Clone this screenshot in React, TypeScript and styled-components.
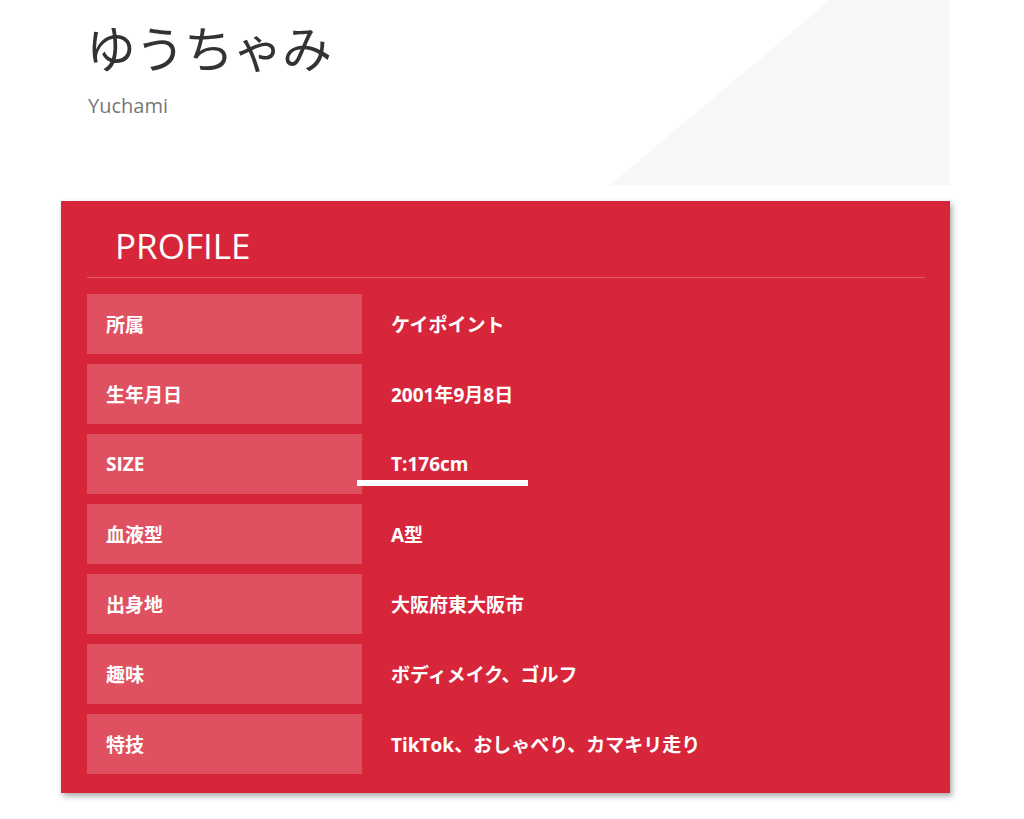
import React from "react";
import styled, { createGlobalStyle } from "styled-components";

const Global = createGlobalStyle`
  html, body { margin: 0; padding: 0; background: #fff; }
  body { font-family: "Open Sans", "Noto Sans CJK JP", sans-serif; }
`;

const Page = styled.div`
  position: relative;
  width: 1024px;
  height: 819px;
  overflow: hidden;
`;

const Deco = styled.svg`
  position: absolute;
  left: 0;
  top: 0;
  z-index: 0;
`;

const Header = styled.header`
  position: relative;
  z-index: 1;
  padding: 14px 0 0 86px;
  height: 201px;
  box-sizing: border-box;
`;

const Title = styled.h1`
  margin: 0;
  font-family: "Noto Sans CJK JP", sans-serif;
  font-weight: 400;
  font-size: 50px;
  line-height: 64px;
  color: #333;
  letter-spacing: -1px;
`;

const Sub = styled.div`
  margin-top: 14px;
  font-family: "Open Sans", sans-serif;
  font-size: 20px;
  color: #777;
  padding-left: 2px;
`;

const Card = styled.section`
  position: relative;
  z-index: 1;
  margin-left: 61px;
  width: 889px;
  background: #d7263a;
  box-shadow: 2px 3px 6px rgba(0, 0, 0, 0.35);
  padding: 22px 25px 19px 26px;
  box-sizing: border-box;
`;

const Heading = styled.h2`
  margin: 0;
  padding: 0 0 8px 28px;
  font-family: "Open Sans", sans-serif;
  font-weight: 400;
  font-size: 35px;
  line-height: 46px;
  color: #fff;
  border-bottom: 1px solid rgba(255, 255, 255, 0.25);
`;

const List = styled.div`
  display: flex;
  flex-direction: column;
  gap: 10px;
  margin-top: 16px;
`;

const Row = styled.div`
  display: grid;
  grid-template-columns: 275px 1fr;
  height: 60px;
  position: relative;
`;

const Label = styled.div`
  background: rgba(255, 255, 255, 0.2);
  display: flex;
  align-items: center;
  padding-left: 19px;
  color: #fff;
  font-weight: 700;
  font-size: 19px;
  font-family: "Open Sans", "Noto Sans CJK JP", sans-serif;
`;

const Value = styled.div`
  display: flex;
  align-items: center;
  padding-left: 29px;
  color: #fff;
  font-weight: 700;
  font-size: 19px;
  font-family: "Open Sans", "Noto Sans CJK JP", sans-serif;
`;

const Underline = styled.div`
  position: absolute;
  left: 270px;
  top: 46px;
  width: 171px;
  height: 6px;
  background: #fff;
`;

const rows: [string, string][] = [
  ["所属", "ケイポイント"],
  ["生年月日", "2001年9月8日"],
  ["SIZE", "T:176cm"],
  ["血液型", "A型"],
  ["出身地", "大阪府東大阪市"],
  ["趣味", "ボディメイク、ゴルフ"],
  ["特技", "TikTok、おしゃべり、カマキリ走り"],
];

export default function App() {
  return (
    <Page>
      <Global />
      <Deco width="1024" height="200">
        <polygon points="610,185 830,0 950,0 950,185" fill="#f7f7f7" />
      </Deco>
      <Header>
        <Title>ゆうちゃみ</Title>
        <Sub>Yuchami</Sub>
      </Header>
      <Card>
        <Heading>PROFILE</Heading>
        <List>
          {rows.map(([k, v]) => (
            <Row key={k}>
              <Label>{k}</Label>
              <Value>{v}</Value>
              {k === "SIZE" && <Underline />}
            </Row>
          ))}
        </List>
      </Card>
    </Page>
  );
}
